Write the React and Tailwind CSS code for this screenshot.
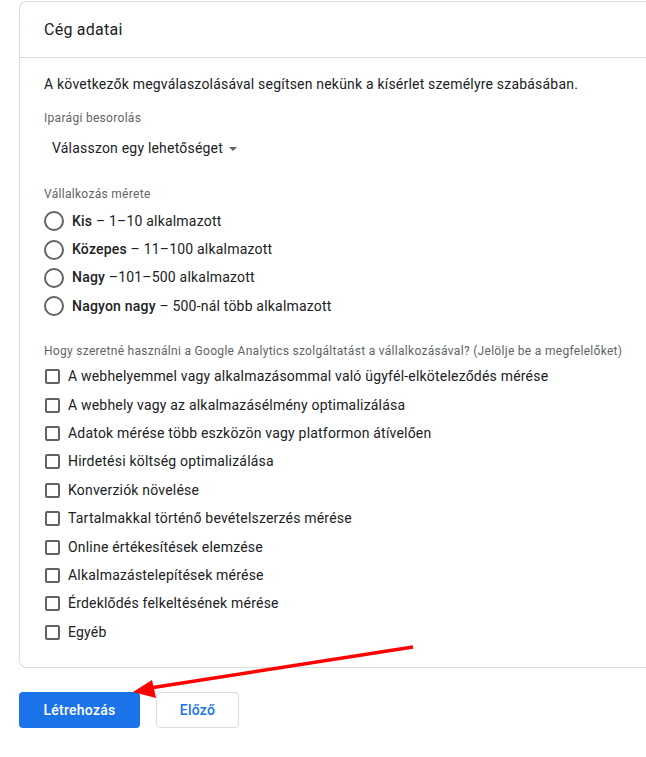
const SIZES = [
  { bold: 'Kis', rest: ' – 1–10 alkalmazott' },
  { bold: 'Közepes', rest: ' – 11–100 alkalmazott' },
  { bold: 'Nagy', rest: ' –101–500 alkalmazott' },
  { bold: 'Nagyon nagy', rest: ' – 500-nál több alkalmazott' },
]

const USES = [
  'A webhelyemmel vagy alkalmazásommal való ügyfél-elköteleződés mérése',
  'A webhely vagy az alkalmazásélmény optimalizálása',
  'Adatok mérése több eszközön vagy platformon átívelően',
  'Hirdetési költség optimalizálása',
  'Konverziók növelése',
  'Tartalmakkal történő bevételszerzés mérése',
  'Online értékesítések elemzése',
  'Alkalmazástelepítések mérése',
  'Érdeklődés felkeltésének mérése',
  'Egyéb',
]

export default function App() {
  return (
    <div className="relative w-[646px] h-[757px] overflow-hidden bg-white font-['Roboto',sans-serif] text-[#202124]">
      <div className="ml-[19px] mt-[1px] border border-r-0 border-[#dadce0] rounded-l-lg">
        <div className="h-[56px] px-6 flex items-center text-[16px] tracking-[0.25px] border-b border-[#dadce0]">
          Cég adatai
        </div>

        <div className="pl-6 pt-4 pb-[21px] tracking-[0.2px]">
          <p className="text-[14px] leading-5">
            A következők megválaszolásával segítsen nekünk a kísérlet személyre szabásában.
          </p>

          <div className="mt-4 text-[12px] leading-4 tracking-[0.3px] text-[#5f6368]">Iparági besorolás</div>
          <div className="mt-3 pl-2 flex items-center gap-[6px] text-[14px] leading-5">
            Válasszon egy lehetőséget
            <svg width="8" height="4" viewBox="0 0 8 4" className="mt-[1px]">
              <path d="M0 0h8L4 4z" fill="#5f6368" />
            </svg>
          </div>

          <div className="mt-[28px] text-[12px] leading-4 tracking-[0.3px] text-[#5f6368]">Vállalkozás mérete</div>
          <div className="mt-[5px]">
            {SIZES.map(s => (
              <div key={s.bold} className="h-[28.4px] flex items-center text-[14px]">
                <span className="w-5 h-5 rounded-full border-2 border-[#5f6368] shrink-0" />
                <span className="ml-2">
                  <span className="font-medium">{s.bold}</span>
                  {s.rest}
                </span>
              </div>
            ))}
          </div>

          <div className="mt-[22px] text-[12px] leading-4 tracking-[0.3px] text-[#5f6368]">
            Hogy szeretné használni a Google Analytics szolgáltatást a vállalkozásával? (Jelölje be a megfelelőket)
          </div>
          <div className="mt-[4px]">
            {USES.map(u => (
              <div key={u} className="h-[28.4px] flex items-center text-[14px]">
                <span className="ml-[1px] w-[15px] h-[15px] rounded-[2px] border-2 border-[#5f6368] shrink-0" />
                <span className="ml-[8px]">{u}</span>
              </div>
            ))}
          </div>
        </div>
      </div>

      <div className="ml-[19px] mt-6 flex gap-4">
        <button className="w-[121px] h-9 rounded bg-[#1a73e8] text-white text-[14px] font-medium tracking-[0.25px]">
          Létrehozás
        </button>
        <button className="w-[83px] h-9 rounded border border-[#dadce0] bg-white text-[#1a73e8] text-[14px] font-medium tracking-[0.25px]">
          Előző
        </button>
      </div>

      <svg className="absolute left-0 top-0 pointer-events-none" width="646" height="757">
        <line x1="413" y1="647" x2="150" y2="688" stroke="#ff0000" strokeWidth="3.5" />
        <path d="M133 692 L152 680 L156 698 Z" fill="#ff0000" />
      </svg>
    </div>
  )
}
